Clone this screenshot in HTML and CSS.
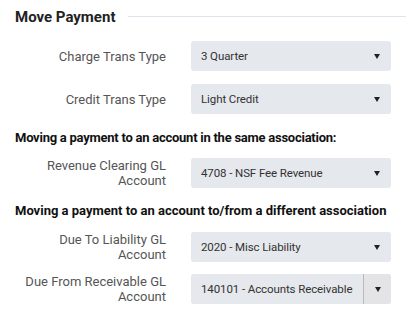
FILE: index.html
```html
<!doctype html>
<html lang="en">
<head>
    <meta charset="UTF-8">
    <title>Move Payment</title>
    <link rel="stylesheet" href="styles.css">
</head>
<body>
<div class="panel">
    <div class="title">Move Payment</div>

    <div class="row">
        <label>Charge Trans Type</label>
        <div class="select"><span>3 Quarter</span><i class="caret"></i></div>
    </div>
    <div class="row">
        <label>Credit Trans Type</label>
        <div class="select"><span>Light Credit</span><i class="caret"></i></div>
    </div>

    <div class="section first">Moving a payment to an account in the same association:</div>
    <div class="row">
        <label>Revenue Clearing GL<br>Account</label>
        <div class="select"><span>4708 - NSF Fee Revenue</span><i class="caret"></i></div>
    </div>

    <div class="section second">Moving a payment to an account to/from a different association</div>
    <div class="row tight">
        <label>Due To Liability GL<br>Account</label>
        <div class="select"><span>2020 - Misc Liability</span><i class="caret"></i></div>
    </div>
    <div class="row">
        <label>Due From Receivable GL<br>Account</label>
        <div class="select split"><span>140101 - Accounts Receivable</span><b class="btn"><i class="caret"></i></b></div>
    </div>
</div>
</body>
</html>
```

FILE: styles.css
```css
*
{
    box-sizing: border-box;
}

body
{
    margin: 0;
    background: #fff;
    font-family: Roboto, sans-serif;
    color: #222;
}

.panel
{
    padding: 7px 0 0 15px;
}

.title
{
    display: flex;
    align-items: center;
    gap: 13px;
    font-size: 15px;
    font-weight: bold;
    line-height: 20px;
    margin-bottom: 14px;
}

.title::after
{
    content: "";
    flex: 1;
    border-top: 1px solid #dde4ec;
    margin-top: -2px;
}

.row
{
    display: grid;
    grid-template-columns: 151px 200px;
    column-gap: 25px;
    align-items: center;
    margin-bottom: 13px;
}

.row.tight
{
    margin-bottom: 12px;
}

.row label
{
    text-align: right;
    font-size: 13px;
    line-height: 15px;
    color: #555;
    white-space: nowrap;
}

.select
{
    display: flex;
    align-items: center;
    justify-content: space-between;
    height: 30px;
    padding: 0 11px 0 10px;
    background: #e5e8ec;
    border-radius: 3px;
    font-size: 11.5px;
    letter-spacing: -0.1px;
    color: #333;
    white-space: nowrap;
}

.caret
{
    width: 0;
    height: 0;
    border-left: 3.5px solid transparent;
    border-right: 3.5px solid transparent;
    border-top: 5px solid #222;
}

.select.split
{
    padding-right: 0;
}

.btn
{
    display: flex;
    align-items: center;
    justify-content: center;
    width: 28px;
    height: 100%;
    border-left: 1px solid #b9b9b9;
    background: #e4e4e6;
    border-radius: 0 3px 3px 0;
}

.section
{
    font-size: 13px;
    font-weight: bold;
    line-height: 20px;
    margin: 14px 0 10px;
    color: #111;
    white-space: nowrap;
}

.section.first
{
    letter-spacing: -0.25px;
}

.section.second
{
    margin: 0 0 11px;
}
```
